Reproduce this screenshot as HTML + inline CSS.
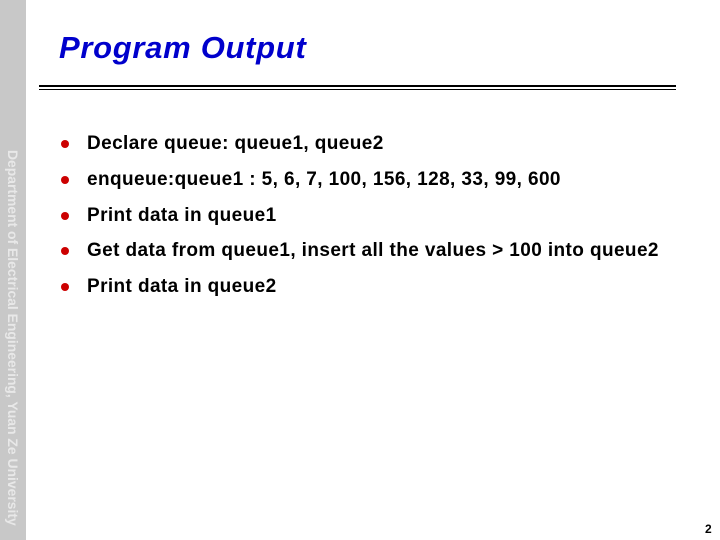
<!DOCTYPE html>
<html><head><meta charset="utf-8"><style>
body{margin:0;width:720px;height:540px;background:#fff;position:relative;overflow:hidden;font-family:"Liberation Sans",Arial,sans-serif}
#side{position:absolute;left:0;top:0;width:26px;height:540px;background:#c8c8c8}
#vt{position:absolute;left:21px;top:150px;transform-origin:0 0;transform:rotate(90deg);white-space:nowrap;color:#e8e8e8;font-weight:bold;font-size:13.9px;letter-spacing:0px}
h1{position:absolute;left:59px;top:30px;margin:0;font-size:31px;font-style:italic;font-weight:bold;color:#0000cc;letter-spacing:0.7px}
.l1{position:absolute;left:39px;top:85px;width:637px;height:2px;background:#000}
.l2{position:absolute;left:39px;top:89px;width:637px;height:1px;background:#000}
ul{position:absolute;left:0;top:0;margin:0;padding:0;list-style:none}
li{position:absolute;left:87px;white-space:nowrap;font-weight:bold;font-size:19px;letter-spacing:0.4px;color:#000;line-height:22px}
li:before{content:"";position:absolute;left:-26px;top:7px;width:8px;height:8px;border-radius:50%;background:#cc0000}
#pn{position:absolute;left:705px;top:522px;font-size:12px;font-weight:bold}
</style></head><body>
<div id="side"></div>
<div id="vt">Department of Electrical Engineering, Yuan Ze University</div>
<h1>Program Output</h1>
<div class="l1"></div><div class="l2"></div>
<ul>
<li style="top:133px">Declare queue: queue1, queue2</li>
<li style="top:169px">enqueue:queue1 : 5, 6, 7, 100, 156, 128, 33, 99, 600</li>
<li style="top:205px">Print data in queue1</li>
<li style="top:240px">Get data from queue1, insert all the values &gt; 100 into queue2</li>
<li style="top:276px">Print data in queue2</li>
</ul>
<div id="pn">2</div>
</body></html>
